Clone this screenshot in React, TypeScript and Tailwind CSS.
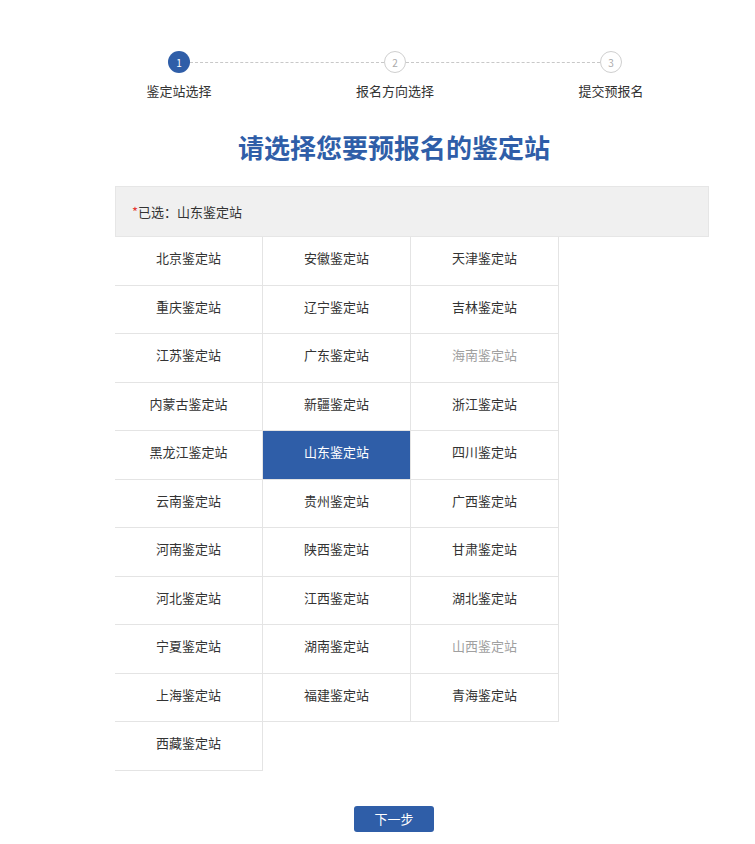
import React, { useState } from "react";

const stations = [
	"北京鉴定站", "安徽鉴定站", "天津鉴定站",
	"重庆鉴定站", "辽宁鉴定站", "吉林鉴定站",
	"江苏鉴定站", "广东鉴定站", "海南鉴定站",
	"内蒙古鉴定站", "新疆鉴定站", "浙江鉴定站",
	"黑龙江鉴定站", "山东鉴定站", "四川鉴定站",
	"云南鉴定站", "贵州鉴定站", "广西鉴定站",
	"河南鉴定站", "陕西鉴定站", "甘肃鉴定站",
	"河北鉴定站", "江西鉴定站", "湖北鉴定站",
	"宁夏鉴定站", "湖南鉴定站", "山西鉴定站",
	"上海鉴定站", "福建鉴定站", "青海鉴定站",
	"西藏鉴定站",
];

const disabled = ["海南鉴定站", "山西鉴定站"];

const Steps = () => {
	return (
		<div className="w-[512px] ml-[24px]">
			<div className="flex items-center mx-[29px]">
				<div className="w-[22px] h-[22px] rounded-full bg-[#2f5ea8] text-white text-[10px] flex items-center justify-center">
					1
				</div>
				<div className="flex-1 border-t border-dashed border-[#c8c8c8]"></div>
				<div className="w-[22px] h-[22px] rounded-full border border-[#cfcfcf] bg-white text-[#aaa] text-[10px] flex items-center justify-center">
					2
				</div>
				<div className="flex-1 border-t border-dashed border-[#c8c8c8]"></div>
				<div className="w-[22px] h-[22px] rounded-full border border-[#cfcfcf] bg-white text-[#aaa] text-[10px] flex items-center justify-center">
					3
				</div>
			</div>
			<div className="flex justify-between mt-[10px] text-[13px] text-[#333] leading-[16px]">
				<div className="w-[80px] text-center">鉴定站选择</div>
				<div className="w-[80px] text-center">报名方向选择</div>
				<div className="w-[80px] text-center">提交预报名</div>
			</div>
		</div>
	);
};

const App = () => {
	const [selected, setSelected] = useState("山东鉴定站");

	return (
		<div
			className="min-h-[844px] bg-white pt-[51px]"
			style={{ fontFamily: '"Microsoft YaHei", "Noto Sans CJK SC", sans-serif' }}
		>
			<div className="ml-[115px] w-[558px]">
				<Steps />
				<h1 className="mt-[33px] text-center text-[26px] leading-[30px] font-bold text-[#2f5ea8]">
					请选择您要预报名的鉴定站
				</h1>
				<div className="mt-[24px] w-[594px] h-[51px] bg-[#f0f0f0] border border-[#e6e6e6] flex items-center pl-[16px] text-[13px] text-[#333]">
					<span className="text-[#e53935]">*</span>已选：{selected}
				</div>
				<div className="grid grid-cols-[148px_148px_148px]">
					{stations.map((s) => {
						const active = s === selected;
						const off = disabled.includes(s);
						return (
							<div
								key={s}
								onClick={() => !off && setSelected(s)}
								className={
									active
										? "h-[48.5px] pb-[6px] flex items-center justify-center text-[13px] bg-[#2f5ea8] text-white border-r border-b border-[#e4e4e4] cursor-pointer"
										: off
										? "h-[48.5px] pb-[6px] flex items-center justify-center text-[13px] text-[#a0a0a0] border-r border-b border-[#e4e4e4]"
										: "h-[48.5px] pb-[6px] flex items-center justify-center text-[13px] text-[#333] border-r border-b border-[#e4e4e4] cursor-pointer"
								}
							>
								{s}
							</div>
						);
					})}
				</div>
				<div className="flex justify-center mt-[35px]">
					<button className="w-[80px] h-[26px] rounded-[3px] bg-[#2f5ea8] text-white text-[13px]">
						下一步
					</button>
				</div>
			</div>
		</div>
	);
};

export default App;
